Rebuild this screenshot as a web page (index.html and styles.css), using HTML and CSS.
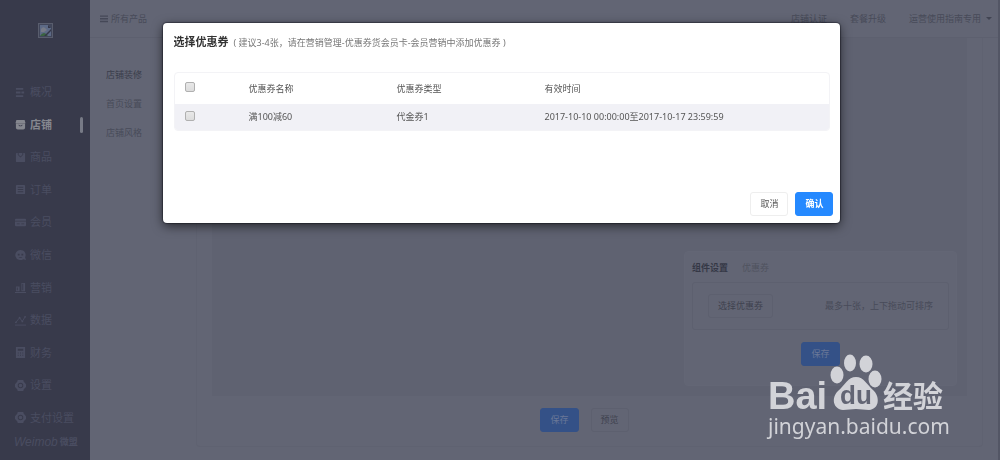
FILE: index.html
```html
<!DOCTYPE html>
<html lang="zh-CN">
<head>
<meta charset="utf-8">
<title>选择优惠券</title>
<link rel="stylesheet" href="styles.css">
</head>
<body>
<div class="app">
  <aside class="sidebar">
    <div class="brand">
      <svg class="brand-img" viewBox="0 0 15 15" aria-hidden="true"><rect x=".5" y=".5" width="14" height="14" fill="#41465a" stroke="#595d6d"/><path d="M2 2h8l3 3v8H2z" fill="#5d6a86"/><path d="M3 6q2-3 4-1l2 2-3 2H3z" fill="#777b87"/><path d="M2 13q4-6 8 0z" fill="#39633f"/><path d="M6 13l7-7v2l-5 5zM10 2v3h3" fill="#343647"/></svg>
    </div>
    <nav class="menu">
      <a href="#" class="menu-item"><svg viewBox="0 0 12 12"><path d="M1 2h8M1 6h5M1 10h8M7 6h3" class="line"/></svg>概况</a>
      <a href="#" class="menu-item active"><svg viewBox="0 0 12 12"><path fill-rule="evenodd" d="M1.500 1h9l1 3.500H.5zM1 5h10v4.500q0 2-2 2H3q-2 0-2-2zM4 6q2 2.500 4 0v1q-2 2-4 0z"/></svg>店铺</a>
      <a href="#" class="menu-item"><svg viewBox="0 0 12 12"><path fill-rule="evenodd" d="M2 1h8q1 0 1 1v8q0 1-1 1H2q-1 0-1-1V2q0-1 1-1zM3 1v2l3 3 3-3V1H8v2L6 5 4 3V1z"/></svg>商品</a>
      <a href="#" class="menu-item"><svg viewBox="0 0 12 12"><path fill-rule="evenodd" d="M2 1h8q1 0 1 1v8q0 1-1 1H2q-1 0-1-1V2q0-1 1-1zM3 3v1h6V3zm0 2.500v1h6v-1zM3 8v1h6V8z"/></svg>订单</a>
      <a href="#" class="menu-item"><svg viewBox="0 0 12 12"><path fill-rule="evenodd" d="M1 2h10q1 0 1 1v6q0 1-1 1H1q-1 0-1-1V3q0-1 1-1zM0 4v1h12V4zm2 3v1h3V7zm5 0v1h3V7z"/></svg>会员</a>
      <a href="#" class="menu-item"><svg viewBox="0 0 12 12"><path fill-rule="evenodd" d="M6 0a5.500 5.500 0 0 1 5 8l1 3-3-1A5.500 5.500 0 1 1 6 0zM3 4v2h2V4zm4 0v2h2V4zM4 7.500q2 2 4 0z"/></svg>微信</a>
      <a href="#" class="menu-item"><svg viewBox="0 0 12 12"><path fill-rule="evenodd" d="M1 5h4v5H1zM7 1h4v9H7zm1 1v7h1V2zM0 11h12v1H0zM2 6v3h1V6z"/></svg>营销</a>
      <a href="#" class="menu-item"><svg viewBox="0 0 12 12"><path d="M1 8l4-5 3 4 3-5M0 11h12" class="line thin"/><circle cx="1" cy="8" r="1"/><circle cx="5" cy="3" r="1"/><circle cx="8" cy="7" r="1"/><circle cx="11" cy="2" r="1"/></svg>数据</a>
      <a href="#" class="menu-item"><svg viewBox="0 0 12 12"><path fill-rule="evenodd" d="M1 0h10v12H1zM3 2v2h6V2zm0 4v1h1V6zm2.500 0v1h1V6zM8 6v1h1V6zM3 8.500v1h1v-1zm2.500 0v1h1v-1zm2.500 0v1h1v-1z"/></svg>财务</a>
      <a href="#" class="menu-item"><svg viewBox="0 0 12 12"><path fill-rule="evenodd" d="M3 0h6l.6 1.800L12 4.500v3L9.600 10 9 12H3l-.6-2L0 7.500v-3l2.400-2.700zM6 3a3 3 0 1 0 0 6 3 3 0 0 0 0-6zm0 1a2 2 0 1 1 0 4 2 2 0 0 1 0-4z"/></svg>设置</a>
      <a href="#" class="menu-item"><svg viewBox="0 0 12 12"><path fill-rule="evenodd" d="M3 0h6l.6 1.800L12 4.500v3L9.600 10 9 12H3l-.6-2L0 7.500v-3l2.400-2.700zM6 3a3 3 0 1 0 0 6 3 3 0 0 0 0-6zm0 1a2 2 0 1 1 0 4 2 2 0 0 1 0-4z"/></svg>支付设置</a>
    </nav>
    <div class="maker"><i>Weimob</i><b>微盟</b></div>
  </aside>

  <div class="page">
    <header class="topbar">
      <a href="#" class="products"><svg viewBox="0 0 9 8" aria-hidden="true"><path d="M0 0h9v1.600H0zM0 3h9v1.600H0zM0 6h9v1.600H0z"/></svg>所有产品</a>
      <nav class="toplinks">
        <a href="#">店铺认证</a>
        <a href="#">套餐升级</a>
        <a href="#" class="account">运营使用指南专用<span class="caret"></span></a>
      </nav>
    </header>
    <div class="body">
      <nav class="subnav">
        <a href="#" class="current">店铺装修</a>
        <a href="#">首页设置</a>
        <a href="#">店铺风格</a>
      </nav>
      <main class="editor">
        <div class="canvas">
          <section class="settings">
            <h2>组件设置<small>优惠券</small></h2>
            <div class="picker">
              <button type="button" class="btn ghost">选择优惠券</button>
              <p>最多十张，上下拖动可排序</p>
            </div>
            <button type="button" class="btn dim">保存</button>
          </section>
        </div>
        <div class="actions">
          <button type="button" class="btn dim">保存</button>
          <button type="button" class="btn ghost">预览</button>
        </div>
      </main>
    </div>
  </div>
</div>

<div class="overlay">
  <div class="modal" role="dialog" aria-labelledby="modal-title">
    <h1 class="modal-head"><span id="modal-title">选择优惠券</span><small>( 建议3-4张，请在营销管理-优惠券货会员卡-会员营销中添加优惠券 )</small></h1>
    <div class="table-box">
      <table class="coupons">
        <thead>
          <tr><th class="pick"><input type="checkbox" aria-label="全选"></th><th class="col">优惠券名称</th><th class="col">优惠券类型</th><th>有效时间</th></tr>
        </thead>
        <tbody>
          <tr><td class="pick"><input type="checkbox" aria-label="满100减60"></td><td>满100减60</td><td>代金券1</td><td>2017-10-10 00:00:00至2017-10-17 23:59:59</td></tr>
        </tbody>
      </table>
    </div>
    <div class="modal-foot">
      <button type="button" class="btn">取消</button>
      <button type="button" class="btn primary">确认</button>
    </div>
  </div>
</div>

<svg class="watermark" viewBox="0 0 190 92" role="img" aria-label="Baidu 经验 jingyan.baidu.com">
  <text x="2" y="57" class="wm-bai">Bai</text>
  <ellipse cx="71" cy="23" rx="6.500" ry="8.500"/>
  <ellipse cx="84" cy="11" rx="6" ry="8.500"/>
  <ellipse cx="100" cy="12" rx="6.500" ry="8.500"/>
  <ellipse cx="109" cy="27" rx="6.500" ry="8.500"/>
  <path d="M90 25C98 25 101 33 107 38C114 44 114 57 103 58C98 58 95 57 90 57C85 57 82 58 77 58C67 57 65 46 72 39C79 33 82 25 90 25Z"/>
  <text x="74" y="52" class="wm-du">du</text>
  <text x="117" y="55" class="wm-cn">经验</text>
  <text x="2" y="82" class="wm-url">jingyan.baidu.com</text>
</svg>
</body>
</html>
```

FILE: styles.css
```css
* { box-sizing: border-box; }

body {
  margin: 0;
  background: #626574;
  color: #484b59;
  font: 9px/16px "Noto Sans", "Noto Sans CJK SC", sans-serif;
}

a { color: inherit; text-decoration: none; }
h1, h2, p { margin: 0; }

.app { display: flex; min-height: 100vh; }

/* Sidebar */
.sidebar {
  display: flex;
  flex-direction: column;
  flex: 0 0 90px;
  background: #383a4b;
  color: #4a4d61;
}
.brand { height: 76px; padding-top: 23px; text-align: center; }
.brand-img { width: 15px; height: 15px; }
.menu { display: flex; flex: 1; flex-direction: column; }
.menu-item {
  display: flex;
  flex: 1;
  align-items: center;
  gap: 4px;
  padding: 0 7px 0 15px;
  font-size: 11px;
}
.menu-item svg { width: 11px; height: 11px; fill: currentColor; }
.menu-item .line { fill: none; stroke: currentColor; stroke-width: 2px; }
.menu-item .thin { stroke-width: 1px; }
.menu-item.active { color: #85878f; font-weight: bold; }
.menu-item.active::after {
  width: 3px;
  height: 16px;
  margin-left: auto;
  border-radius: 2px;
  background: #777a86;
  content: "";
}
.maker { display: flex; gap: 2px; height: 26px; padding-left: 14px; }
.maker i { font: italic 12px/16px "Liberation Sans", sans-serif; }
.maker b { font-size: 9px; }

/* Page */
.page { display: flex; flex: 1; flex-direction: column; border-right: 2px solid #535665; }
.topbar {
  display: flex;
  align-items: center;
  justify-content: space-between;
  height: 38px;
  padding: 0 6px 0 10px;
  border-bottom: 1px solid #5d606f;
}
.products { display: flex; align-items: center; gap: 3px; }
.products svg { width: 8px; height: 8px; fill: #454857; }
.toplinks { display: flex; gap: 23px; }
.account { display: flex; align-items: center; gap: 5px; }
.caret { border: 3px solid transparent; border-top-color: #414452; border-bottom: 0; }

.body { display: flex; flex: 1; }
.subnav {
  display: flex;
  flex: 0 0 106px;
  flex-direction: column;
  gap: 13px;
  padding: 29px 16px;
}
.subnav .current { color: #3a3d4b; }
.editor {
  display: flex;
  flex: 1;
  flex-direction: column;
  margin: 0 15px 13px 0;
  padding: 0 15px;
  border: 1px solid #5f6271;
  border-top: 0;
  border-radius: 0 0 4px 4px;
}
.canvas {
  display: flex;
  flex: 1;
  align-items: flex-end;
  justify-content: flex-end;
  padding: 10px;
  background: #5f6271;
}
.settings {
  display: flex;
  flex: 0 0 273px;
  flex-direction: column;
  align-items: center;
  padding: 8px 7px 19px;
  border: 1px solid #636675;
  border-radius: 4px;
  background: #626574;
}
.settings h2 { align-self: stretch; color: #353846; font-size: 9px; }
.settings small { margin-left: 14px; color: #50535f; font-size: 9px; font-weight: normal; }
.picker {
  display: flex;
  align-self: stretch;
  align-items: center;
  justify-content: space-between;
  margin: 6px 0 12px;
  padding: 11px 15px;
  border: 1px solid #5d606f;
  border-radius: 3px;
}
.actions { display: flex; gap: 12px; justify-content: center; padding: 12px 10px 14px 0; }

/* Buttons */
.btn {
  height: 24px;
  padding: 0 9px;
  border: 1px solid #eee;
  border-radius: 3px;
  background: #fff;
  color: #555;
  font: inherit;
}
.btn.primary { border-color: #2589ff; background: #2589ff; color: #fff; font-weight: bold; }
.btn.dim { border-color: #345187; background: #345187; color: #697797; }
.btn.ghost { border-color: #5d606f; background: #626574; color: #3f424f; }

/* Dialog */
.overlay {
  position: fixed;
  inset: 0;
  display: flex;
  align-items: flex-start;
  justify-content: center;
  padding: 23px 0 23px 3px;
}
.modal {
  width: 68%;
  padding: 10px 7px 7px 11px;
  border-radius: 4px;
  background: #fff;
  box-shadow: 0 3px 11px rgba(0, 0, 0, .6), 0 0 1px 1px rgba(40, 42, 55, .6);
}
.modal-head { color: #333; font-size: 11px; line-height: 18px; }
.modal-head small { margin-left: 5px; color: #777; font-size: 9px; font-weight: normal; }
.table-box {
  margin: 20px 3px 61px 0;
  overflow: hidden;
  border: 1px solid #f3f3f6;
  border-radius: 4px;
}
.coupons { width: 100%; border-collapse: collapse; table-layout: fixed; color: #555; }
.coupons th, .coupons td { padding: 0; font-weight: normal; text-align: left; }
.coupons th { height: 31px; }
.coupons td { height: 26px; }
.coupons .pick { width: 74px; padding: 0 0 3px 10px; }
.coupons .col { width: 148px; }
.coupons tbody { background: #f1f1f6; }
.coupons input {
  display: block;
  width: 10px;
  height: 10px;
  margin: 0;
  appearance: none;
  border: 1px solid #b0b0b0;
  border-radius: 2px;
  background: linear-gradient(#e8e8e8, #dcdcdc);
}
.modal-foot { display: flex; gap: 7px; justify-content: flex-end; }

/* Watermark */
.watermark { position: fixed; right: 44px; bottom: 16px; width: 190px; height: 92px; fill: #d2d3d8; }
.wm-bai { font: bold 38px "Liberation Sans", sans-serif; }
.wm-du { fill: #626574; font: bold 26px "Liberation Sans", sans-serif; }
.wm-cn { font: bold 30px "Noto Sans CJK SC", sans-serif; }
.wm-url { font: 21px "Noto Sans", sans-serif; }
```
